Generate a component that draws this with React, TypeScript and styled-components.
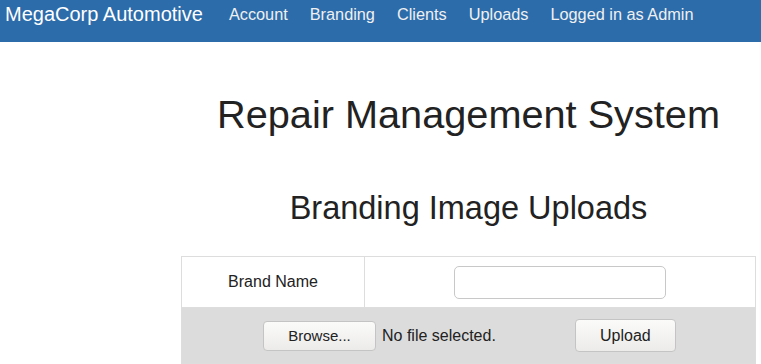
import styled, { createGlobalStyle } from "styled-components";

const GlobalStyle = createGlobalStyle`
  body {
    margin: 0;
    font-family: "Liberation Sans", Arial, sans-serif;
    color: #222;
    background: #fff;
  }
`;

const NavBar = styled.nav`
  display: flex;
  align-items: flex-start;
  height: 42px;
  background-color: #2c6cab;
  padding: 0 0 0 5px;
  box-sizing: border-box;
`;

const Brand = styled.a`
  font-size: 20px;
  color: #fff;
  text-decoration: none;
  line-height: 28px;
  margin-right: 26px;
`;

const NavLinks = styled.div`
  display: flex;
  gap: 22px;
  a {
    font-size: 16.3px;
    line-height: 28px;
    color: #f0f0f0;
    text-decoration: none;
  }
`;

const Page = styled.main`
  display: flex;
`;

const Sidebar = styled.aside`
  width: 181px;
  flex-shrink: 0;
`;

const Content = styled.section`
  width: 575px;
`;

const Title = styled.h1`
  margin: 48px 0 0;
  font-size: 39.7px;
  font-weight: normal;
  text-align: center;
  line-height: 48px;
`;

const Subtitle = styled.h2`
  margin: 52px 0 0;
  font-size: 32.5px;
  font-weight: normal;
  text-align: center;
  line-height: 36px;
`;

const Table = styled.table`
  margin-top: 30px;
  width: 100%;
  border-collapse: collapse;
  td {
    border: 1px solid #dddddd;
    font-size: 16px;
    text-align: center;
  }
`;

const Row = styled.tr<{ $shaded?: boolean }>`
  height: ${(p) => (p.$shaded ? "56px" : "51px")};
  background: ${(p) => (p.$shaded ? "#dcdcdc" : "#fff")};
`;

const LabelCell = styled.td`
  width: 180px;
`;

const TextInput = styled.input`
  width: 212px;
  height: 33px;
  box-sizing: border-box;
  border: 1px solid #c8c8c8;
  border-radius: 5px;
  background: #fff;
`;

const Button = styled.button<{ $wide?: boolean }>`
  font-family: "Liberation Sans", Arial, sans-serif;
  font-size: ${(p) => (p.$wide ? "16px" : "15px")};
  color: #222;
  height: ${(p) => (p.$wide ? "33px" : "30px")};
  width: ${(p) => (p.$wide ? "101px" : "113px")};
  border: 1px solid #c4c4c4;
  border-radius: 4px;
  background: linear-gradient(#fbfbfa, #ecebe9);
  padding: 0;
`;

const FileRow = styled.div`
  display: flex;
  align-items: center;
  padding-left: 80px;
`;

const FileLabel = styled.span`
  font-size: 16px;
  margin-left: 6px;
  margin-right: 79px;
`;

export default function App() {
  return (
    <>
      <GlobalStyle />
      <NavBar>
        <Brand href="#">MegaCorp Automotive</Brand>
        <NavLinks>
          <a href="#">Account</a>
          <a href="#">Branding</a>
          <a href="#">Clients</a>
          <a href="#">Uploads</a>
          <a href="#">Logged in as Admin</a>
        </NavLinks>
      </NavBar>
      <Page>
        <Sidebar />
        <Content>
          <Title>Repair Management System</Title>
          <Subtitle>Branding Image Uploads</Subtitle>
          <Table>
            <tbody>
              <Row>
                <LabelCell>Brand Name</LabelCell>
                <td>
                  <TextInput type="text" />
                </td>
              </Row>
              <Row $shaded>
                <td colSpan={2}>
                  <FileRow>
                    <Button>Browse...</Button>
                    <FileLabel>No file selected.</FileLabel>
                    <Button $wide>Upload</Button>
                  </FileRow>
                </td>
              </Row>
            </tbody>
          </Table>
        </Content>
      </Page>
    </>
  );
}
